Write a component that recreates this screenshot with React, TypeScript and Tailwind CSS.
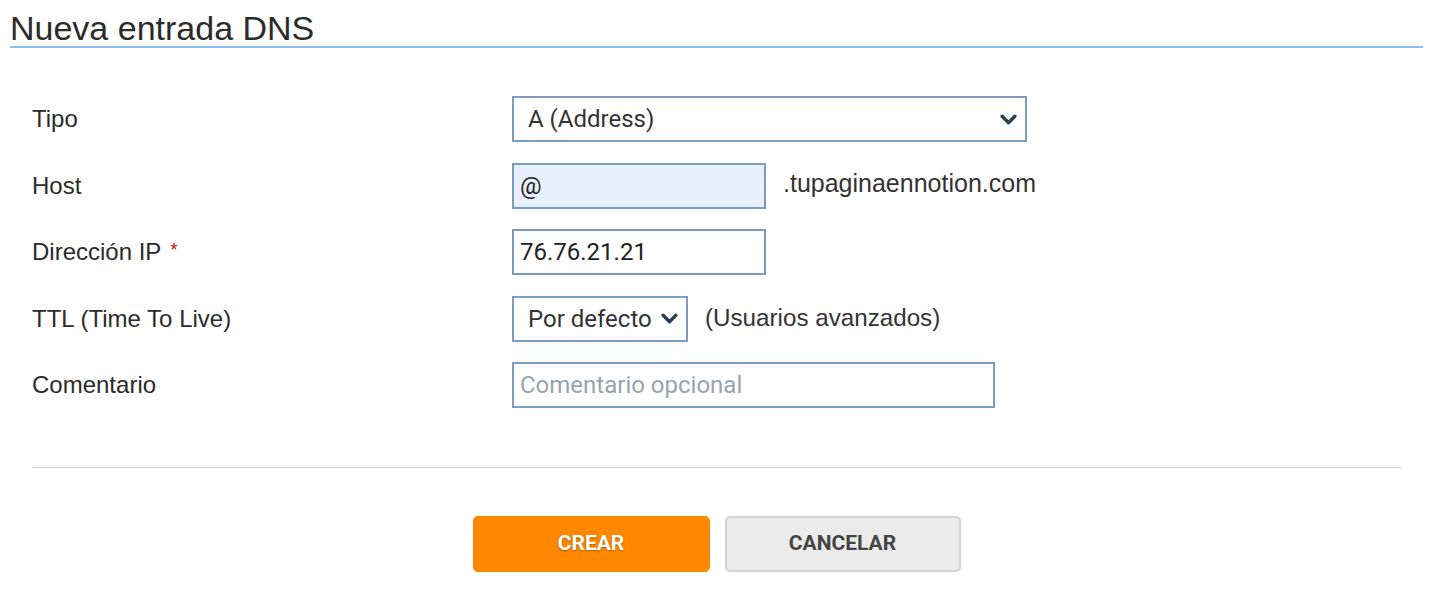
import type { ReactNode } from "react";

function Chevron({ className = "" }: { className?: string }) {
  return (
    <svg viewBox="0 0 16 10" className={"h-[11px] w-[17px] " + className} fill="none">
      <path d="M2 2l6 6 6-6" stroke="#2c3e50" strokeWidth="3.2" strokeLinecap="round" strokeLinejoin="round" />
    </svg>
  );
}

function Row({ label, children }: { label: ReactNode; children: ReactNode }) {
  return (
    <div className="flex h-[46px] items-center">
      <div className="w-[480px] text-[24px] text-[#2b2b2b]">{label}</div>
      <div className="flex items-center">{children}</div>
    </div>
  );
}

const fieldBase =
  "h-[46px] border-2 border-[#7d9bbd] font-['Roboto',sans-serif] text-[24px] text-[#222] outline-none";

export default function App() {
  return (
    <div className="h-[605px] w-[1456px] bg-white pl-[10px] pr-[33px] font-['Liberation_Sans',Arial,sans-serif] text-[#2b2b2b]">
      <h1 className="border-b-2 border-[#8cbcf0] pt-[10px] text-[34px] leading-[36px]">Nueva entrada DNS</h1>

      <div className="px-[22px] pt-[48px]">
        <div className="flex flex-col gap-[20.5px]">
          <Row label="Tipo">
            <div className={fieldBase + " flex w-[515px] items-center justify-between pl-[14px] pr-[8px] text-[#333]"}>
              <span>A (Address)</span>
              <Chevron />
            </div>
          </Row>

          <Row label="Host">
            <input
              readOnly
              value="@"
              className={fieldBase + " w-[254px] bg-[#e8f0fe] px-[6px] font-['DejaVu_Sans',sans-serif] text-[22px]"}
            />
            <span className="ml-[17px] -mt-[4px] text-[25px] text-[#333]">.tupaginaennotion.com</span>
          </Row>

          <Row
            label={
              <span>
                Dirección IP<span className="relative -top-[4px] ml-[9px] text-[18px] text-[#e00000]">*</span>
              </span>
            }
          >
            <input readOnly value="76.76.21.21" className={fieldBase + " w-[254px] bg-white px-[6px]"} />
          </Row>

          <Row label="TTL (Time To Live)">
            <div className={fieldBase + " flex w-[176px] items-center justify-between pl-[14px] pr-[8px] text-[#333]"}>
              <span>Por defecto</span>
              <Chevron />
            </div>
            <span className="ml-[17px] text-[24.2px] text-[#333]">(Usuarios avanzados)</span>
          </Row>

          <Row label="Comentario">
            <input
              readOnly
              placeholder="Comentario opcional"
              className={fieldBase + " w-[483px] bg-white px-[6px] placeholder:text-[#9aa3ad]"}
            />
          </Row>
        </div>

        <div className="mt-[59px] border-t border-[#d3d3d3]" />

        <div className="mt-[48px] flex justify-center gap-[15px] font-['Roboto',sans-serif] text-[21px] font-bold">
          <button className="h-[56px] w-[237px] rounded-[5px] border border-[#f58200] bg-[#ff8800] text-white [text-shadow:0_1px_2px_rgba(0,0,0,0.35)]">
            CREAR
          </button>
          <button className="h-[56px] w-[236px] rounded-[5px] border-2 border-[#d4d4d4] bg-[#ebebeb] text-[#444]">
            CANCELAR
          </button>
        </div>
      </div>
    </div>
  );
}
